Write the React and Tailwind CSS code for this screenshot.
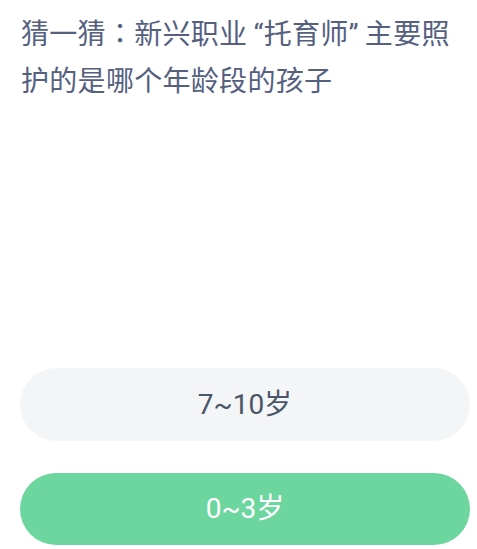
export default function App() {
  return (
    <div
      className="w-[477px] h-[549px] bg-white flex flex-col overflow-hidden"
      style={{ fontFamily: 'Roboto, "Noto Sans CJK SC", sans-serif' }}
    >
      <div className="pl-[21px] pr-[6px] pt-[9px] text-[28px] leading-[47px] tracking-[0.3px] text-[#55607f]">
        猜一猜<span className="font-['Noto_Sans_CJK_JP']">：</span>新兴职业<span className="ml-[6px]">“</span>托育师<span className="mr-[6px]">”</span>主要照护的是哪个年龄段的孩子
      </div>
      <div className="mt-auto pl-[20px] pr-[7px] pb-[4px] flex flex-col gap-[32px]">
        <div className="h-[73px] rounded-full bg-[#f4f5f7] flex items-center justify-center text-[28px] text-[#4a5568]">
          7~10岁
        </div>
        <div className="h-[72px] rounded-full bg-[#6dd69f] flex items-center justify-center text-[28px] text-white">
          0~3岁
        </div>
      </div>
    </div>
  );
}
